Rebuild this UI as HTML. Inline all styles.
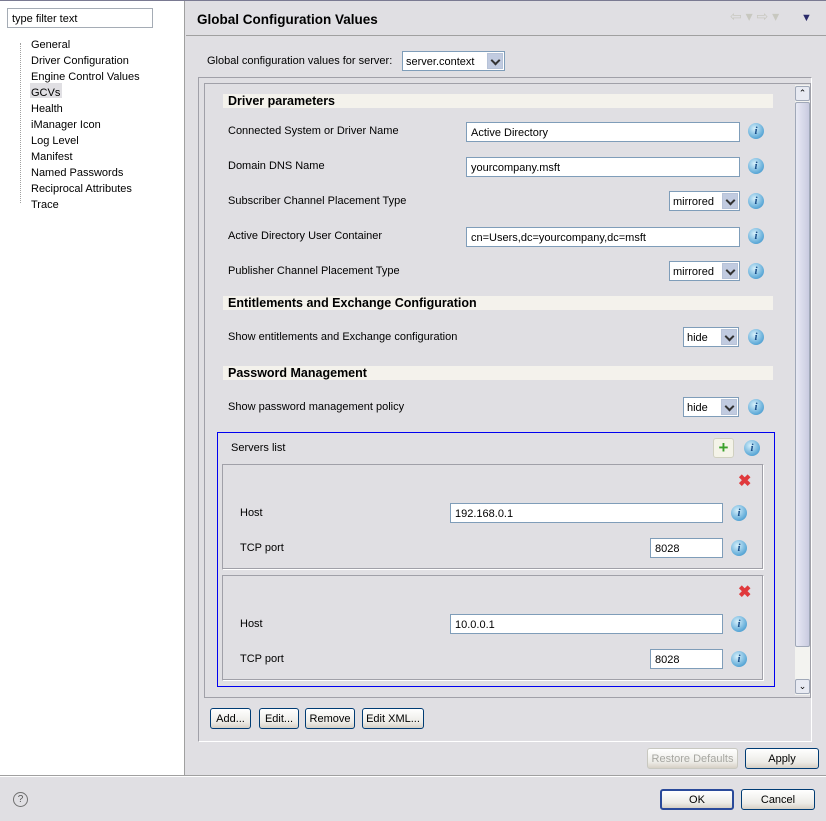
<!DOCTYPE html><html><head><style>
*{box-sizing:border-box;margin:0;padding:0}
body{width:826px;height:821px;background:#e0dfe3;font-family:"Liberation Sans",sans-serif;font-size:11px;color:#000;position:relative;overflow:hidden}
.a{position:absolute}
.t{position:absolute;white-space:nowrap;line-height:13px}
.f{position:absolute;background:#fff;border:1px solid #7f9db9;height:20px;padding:4px 4px 2px;line-height:12px;white-space:nowrap}
.cb{position:absolute;background:#fff;border:1px solid #7f9db9;height:20px;padding:4px 3px 2px;line-height:12px}
.cb i{position:absolute;right:1px;top:1px;width:16px;height:16px;background:#c1cbe0;border:1px solid #b7c3d8}
.cb i:after{content:"";position:absolute;left:4px;top:3px;width:5px;height:5px;border-right:2px solid #333;border-bottom:2px solid #333;transform:rotate(45deg)}
.hd{position:absolute;left:223px;width:550px;height:14px;background:#f4f2ec;font-weight:bold;font-size:12.5px;line-height:15px;padding-left:5px}
.in{position:absolute;width:16px;height:16px;border-radius:50%;background:radial-gradient(circle at 40% 35%,#d6f0fb,#5aa7d6 70%,#3a86bd);color:#1a4f8a;font:italic bold 11px "Liberation Serif",serif;text-align:center;line-height:16px}
.b{position:absolute;height:21px;border:1px solid #003c74;border-radius:3px;background:linear-gradient(#fff,#ecebe6 70%,#d6d0c5);text-align:center;line-height:21px}
.x{position:absolute;color:#e0393c;font-weight:bold;font-size:16px;line-height:14px}
</style></head><body>
<div class="a" style="left:0;top:0;width:185px;height:775px;background:#fff;border-right:1px solid #a0a0a0"></div>
<div class="a" style="left:0;top:0;width:826px;height:1px;background:#7a7a92"></div>
<div class="f" style="left:7px;top:8px;width:146px;border-color:#a5acb5">type filter text</div>
<div class="a" style="left:20px;top:43px;height:160px;border-left:1px dotted #a0a0a0"></div>
<div class="a" style="left:30px;top:83px;width:32px;height:15px;background:#e0dfe3"></div>
<div class="t" style="left:31px;top:37px;line-height:16px">General<br>Driver Configuration<br>Engine Control Values<br>GCVs<br>Health<br>iManager Icon<br>Log Level<br>Manifest<br>Named Passwords<br>Reciprocal Attributes<br>Trace</div>
<div class="t" style="left:197px;top:12px;font-weight:bold;font-size:13.5px;line-height:16px">Global Configuration Values</div>
<div class="a" style="left:186px;top:35px;width:640px;height:1px;background:#a0a0a0"></div>
<div class="t" style="left:730px;top:10px;color:#c8c8c0;font-size:14px">⇦ ▾ ⇨ ▾</div>
<div class="t" style="left:801px;top:12px;color:#2a2a6a;font-size:11px">▼</div>
<div class="t" style="left:207px;top:55px">Global configuration values for server:</div>
<div class="cb" style="left:402px;top:51px;width:103px">server.context<i></i></div>
<div class="a" style="left:198px;top:77px;width:614px;height:665px;border:1px solid #a0a0a8;border-right-color:#fff;border-bottom-color:#fff"></div>
<div class="a" style="left:204px;top:83px;width:607px;height:615px;border:1px solid #a0a0a8"></div>
<div class="a" style="left:795px;top:85px;width:15px;height:610px;background:#f3f3f0"></div>
<div class="a" style="left:795px;top:86px;width:15px;height:15px;border:1px solid #a0a8b8;background:#e8eaf2;border-radius:2px;text-align:center;font-size:9px;line-height:13px">⌃</div>
<div class="a" style="left:795px;top:102px;width:15px;height:545px;border:1px solid #a0a8b8;background:linear-gradient(90deg,#e8e9f4,#c9cbe0);border-radius:2px"></div>
<div class="a" style="left:795px;top:679px;width:15px;height:15px;border:1px solid #a0a8b8;background:#e8eaf2;border-radius:2px;text-align:center;font-size:9px;line-height:13px">⌄</div>
<div class="hd" style="top:94px">Driver parameters</div>
<div class="t" style="left:228px;top:125px">Connected System or Driver Name</div><div class="f" style="left:466px;top:122px;width:274px">Active Directory</div><div class="in" style="left:748px;top:123px">i</div>
<div class="t" style="left:228px;top:160px">Domain DNS Name</div><div class="f" style="left:466px;top:157px;width:274px">yourcompany.msft</div><div class="in" style="left:748px;top:158px">i</div>
<div class="t" style="left:228px;top:195px">Subscriber Channel Placement Type</div><div class="cb" style="left:669px;top:191px;width:71px">mirrored<i></i></div><div class="in" style="left:748px;top:193px">i</div>
<div class="t" style="left:228px;top:230px">Active Directory User Container</div><div class="f" style="left:466px;top:227px;width:274px">cn=Users,dc=yourcompany,dc=msft</div><div class="in" style="left:748px;top:228px">i</div>
<div class="t" style="left:228px;top:265px">Publisher Channel Placement Type</div><div class="cb" style="left:669px;top:261px;width:71px">mirrored<i></i></div><div class="in" style="left:748px;top:263px">i</div>
<div class="hd" style="top:296px">Entitlements and Exchange Configuration</div>
<div class="t" style="left:228px;top:331px">Show entitlements and Exchange configuration</div><div class="cb" style="left:683px;top:327px;width:56px">hide<i></i></div><div class="in" style="left:748px;top:329px">i</div>
<div class="hd" style="top:366px">Password Management</div>
<div class="t" style="left:228px;top:401px">Show password management policy</div><div class="cb" style="left:683px;top:397px;width:56px">hide<i></i></div><div class="in" style="left:748px;top:399px">i</div>
<div class="a" style="left:217px;top:432px;width:558px;height:255px;border:1px solid #0000f0"></div>
<div class="t" style="left:231px;top:442px">Servers list</div>
<div class="a" style="left:713px;top:438px;width:21px;height:20px;border:1px solid #d0d0c0;border-radius:3px;background:#f4f3e8;color:#3aa02a;font-weight:bold;font-size:17px;line-height:17px;text-align:center">+</div>
<div class="in" style="left:744px;top:440px">i</div>
<div class="a" style="left:222px;top:464px;width:542px;height:106px;border:1px solid #a0a0a8;border-right-color:#fff;border-bottom-color:#fff;box-shadow:inset -1px -1px 0 #a0a0a8"></div>
<div class="x" style="left:738px;top:475px">✖</div>
<div class="t" style="left:240px;top:507px">Host</div><div class="f" style="left:450px;top:503px;width:273px">192.168.0.1</div><div class="in" style="left:731px;top:505px">i</div>
<div class="t" style="left:240px;top:542px">TCP port</div><div class="f" style="left:650px;top:538px;width:73px">8028</div><div class="in" style="left:731px;top:540px">i</div>
<div class="a" style="left:222px;top:575px;width:542px;height:106px;border:1px solid #a0a0a8;border-right-color:#fff;border-bottom-color:#fff;box-shadow:inset -1px -1px 0 #a0a0a8"></div>
<div class="x" style="left:738px;top:586px">✖</div>
<div class="t" style="left:240px;top:618px">Host</div><div class="f" style="left:450px;top:614px;width:273px">10.0.0.1</div><div class="in" style="left:731px;top:616px">i</div>
<div class="t" style="left:240px;top:653px">TCP port</div><div class="f" style="left:650px;top:649px;width:73px">8028</div><div class="in" style="left:731px;top:651px">i</div>
<div class="b" style="left:210px;top:708px;width:41px">Add...</div>
<div class="b" style="left:259px;top:708px;width:40px">Edit...</div>
<div class="b" style="left:305px;top:708px;width:50px">Remove</div>
<div class="b" style="left:362px;top:708px;width:62px">Edit XML...</div>
<div class="b" style="left:647px;top:748px;width:91px;color:#a6a6a0;border-color:#c8c8c0">Restore Defaults</div>
<div class="b" style="left:745px;top:748px;width:74px">Apply</div>
<div class="a" style="left:0;top:775px;width:826px;height:1px;background:#a0a0a0"></div>
<div class="a" style="left:0;top:776px;width:826px;height:1px;background:#fff"></div>
<div class="a" style="left:13px;top:792px;width:15px;height:15px;border:1px solid #707070;border-radius:50%;text-align:center;line-height:13px;font-size:10px;color:#555">?</div>
<div class="b" style="left:660px;top:789px;width:74px;border-width:2px;border-color:#2a4a9a;line-height:19px">OK</div>
<div class="b" style="left:741px;top:789px;width:74px">Cancel</div>
</body></html>
